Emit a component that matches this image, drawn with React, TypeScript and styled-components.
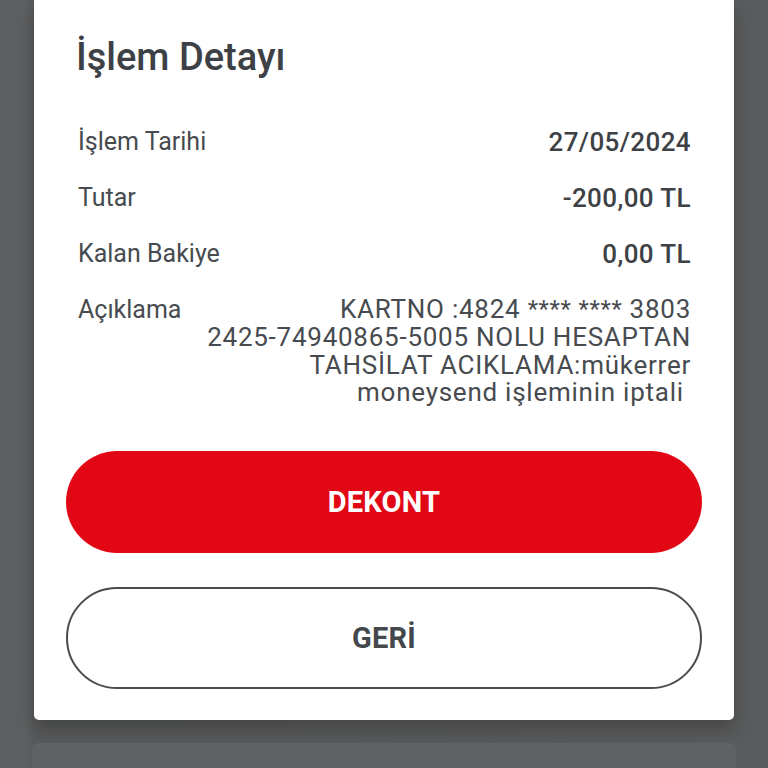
import styled, { createGlobalStyle } from "styled-components";

const GlobalStyle = createGlobalStyle`
  * {
    box-sizing: border-box;
  }
  html,
  body {
    margin: 0;
    padding: 0;
    background: #5a5b5c;
  }
  body {
    font-family: Roboto, "Noto Sans", Arial, sans-serif;
  }
`;

const Screen = styled.div`
  width: 768px;
  height: 768px;
  overflow: hidden;
  display: flex;
  flex-direction: column;
  align-items: center;
  gap: 23px;
  background: linear-gradient(90deg, #5e5f60 0, #5e5f60 26px, #58595a 34px, #5a5b5c 100%);
`;

const Sheet = styled.section`
  width: 700px;
  flex-shrink: 0;
  background: #ffffff;
  border-radius: 0 0 5px 5px;
  padding: 34px 32px 31px;
  box-shadow: 0 10px 18px rgba(0, 0, 0, 0.22);
`;

const Title = styled.h2`
  margin: 0 0 48px;
  padding: 0 12px 0 10px;
  font-size: 38px;
  line-height: 46px;
  font-weight: 500;
  color: #3d4145;
`;

const DetailList = styled.dl`
  margin: 0 0 44px;
  padding: 0 11px 0 12px;
  display: flex;
  flex-direction: column;
  gap: 28px;
`;

const Row = styled.div`
  display: flex;
  justify-content: space-between;
  align-items: flex-start;
  gap: 16px;
  font-size: 25px;
  line-height: 28px;
`;

const Label = styled.dt`
  margin: 0;
  font-weight: 400;
  color: #474b4f;
  white-space: nowrap;
`;

const Value = styled.dd`
  margin: 0;
  font-size: 26px;
  font-weight: 500;
  letter-spacing: 0.4px;
  color: #3d4145;
  text-align: right;
`;

const Description = styled.dd`
  margin: 0;
  font-size: 26px;
  line-height: 27.8px;
  font-weight: 400;
  letter-spacing: 0.75px;
  color: #474b4f;
  text-align: right;
  span {
    display: block;
    white-space: nowrap;
  }
  em {
    font-style: normal;
    font-size: 24px;
    letter-spacing: 0.6px;
    vertical-align: 1px;
  }
`;

const Actions = styled.div`
  display: flex;
  flex-direction: column;
  gap: 34px;
`;

interface IButton {
  $variant: "primary" | "outline";
}

const Button = styled.button<IButton>`
  width: 100%;
  height: 102px;
  border-radius: 51px;
  font-family: Roboto, "Noto Sans", Arial, sans-serif;
  font-size: 29px;
  font-weight: 700;
  letter-spacing: 0.2px;
  cursor: pointer;
  border: ${(props) =>
    props.$variant === "primary" ? "none" : "2px solid #4a4b4d"};
  background: ${(props) =>
    props.$variant === "primary" ? "#e20714" : "#ffffff"};
  color: ${(props) => (props.$variant === "primary" ? "#ffffff" : "#44484c")};
`;

const BehindCard = styled.div`
  width: 704px;
  flex: 1;
  background: #606162;
  border-radius: 6px 6px 0 0;
`;

const details = [
  { label: "İşlem Tarihi", value: "27/05/2024" },
  { label: "Tutar", value: "-200,00 TL" },
  { label: "Kalan Bakiye", value: "0,00 TL" },
];

const App = () => {
  return (
    <>
      <GlobalStyle />
      <Screen>
        <Sheet>
          <Title>İşlem Detayı</Title>
          <DetailList>
            {details.map((x) => (
              <Row key={x.label}>
                <Label>{x.label}</Label>
                <Value>{x.value}</Value>
              </Row>
            ))}
            <Row>
              <Label>Açıklama</Label>
              <Description>
                <span>
                  KARTNO :4824 <em>****</em> <em>****</em> 3803
                </span>
                <span>2425-74940865-5005 NOLU HESAPTAN</span>
                <span>TAHSİLAT ACIKLAMA:mükerrer</span>
                <span>moneysend işleminin iptali{"\u00a0"}</span>
              </Description>
            </Row>
          </DetailList>
          <Actions>
            <Button $variant="primary">DEKONT</Button>
            <Button $variant="outline">GERİ</Button>
          </Actions>
        </Sheet>
        <BehindCard />
      </Screen>
    </>
  );
};

export default App;
